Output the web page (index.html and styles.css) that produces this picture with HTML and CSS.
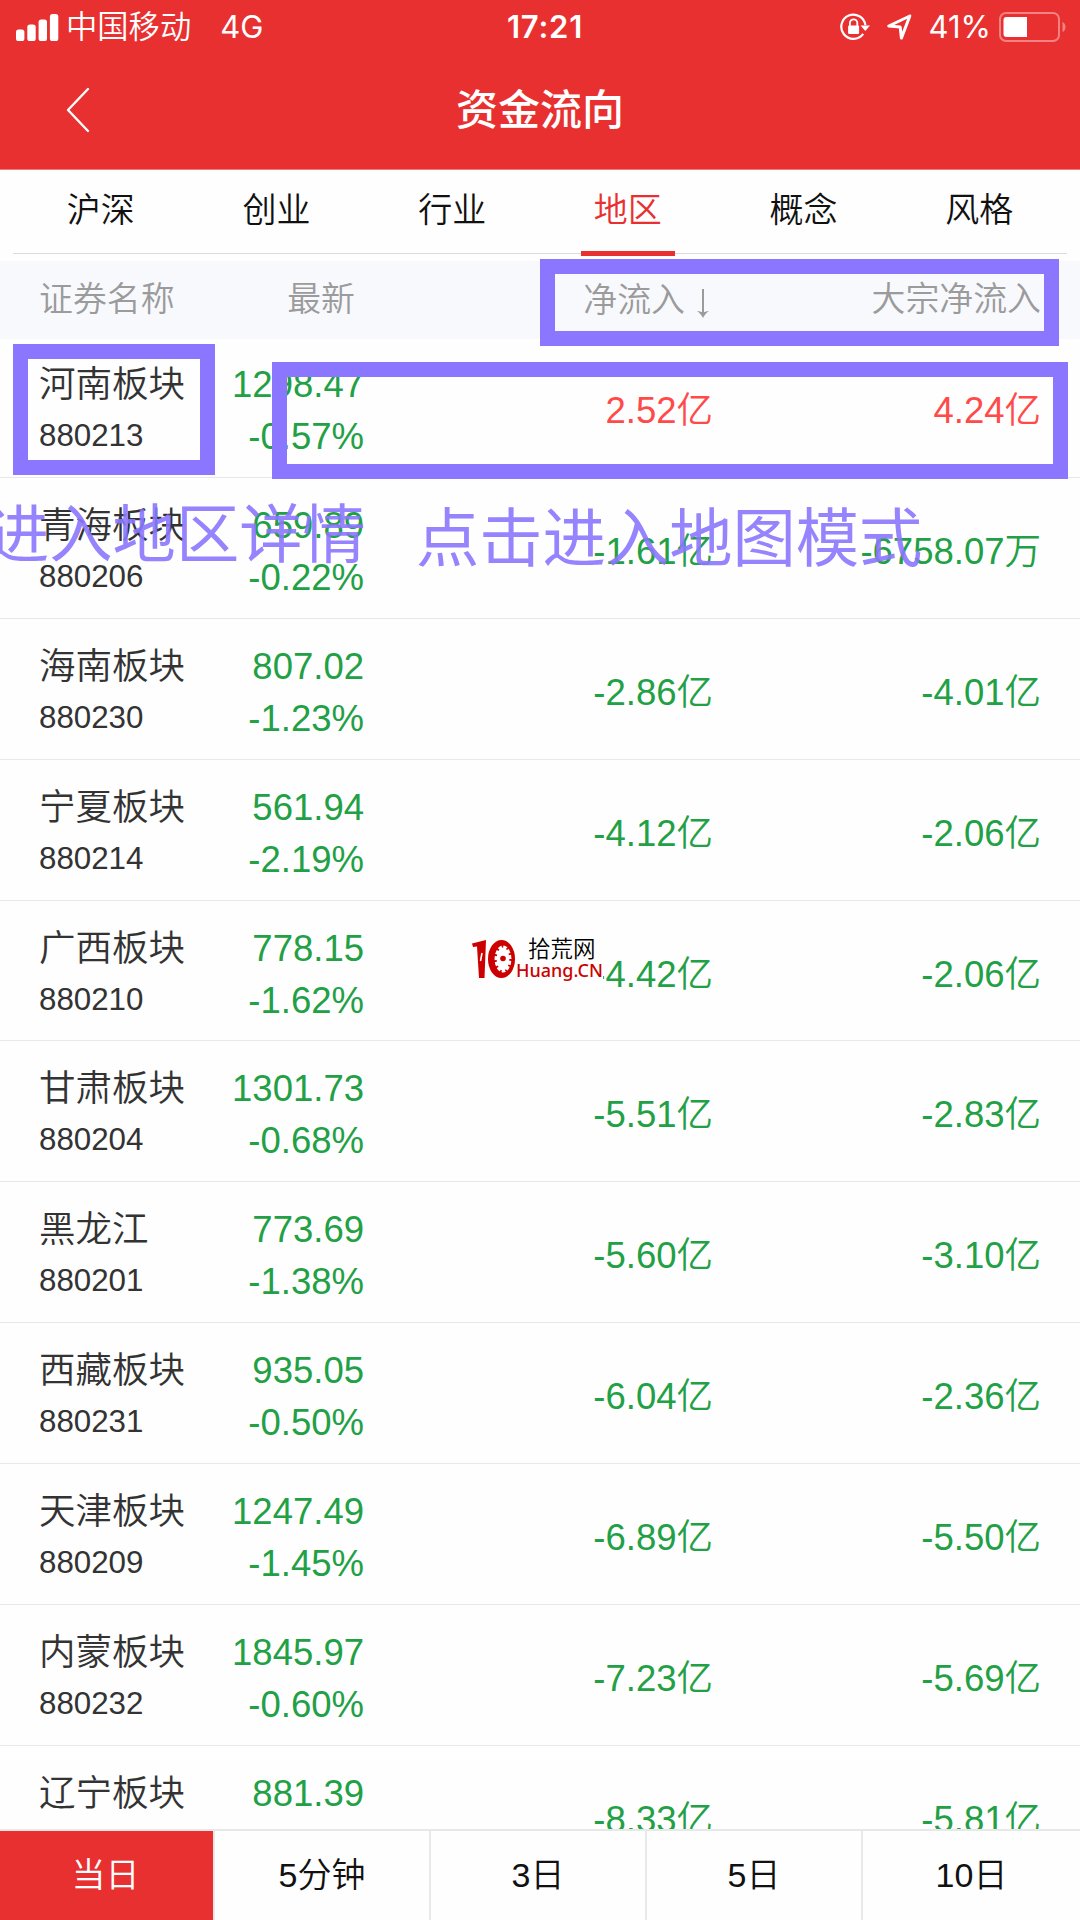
FILE: index.html
```html
<!DOCTYPE html>
<html lang="zh-CN">
<head>
  <meta charset="UTF-8" />
  <meta name="viewport" content="width=device-width, initial-scale=1.0" />
  <title>资金流向</title>
  <link rel="stylesheet" href="styles.css">
</head>
<body>

  <!-- HEADER -->
  <header>
    <div class="status-bar">
      <div class="status-left">
        <svg class="signal" width="43" height="27" viewBox="0 0 43 27" fill="#fff">
          <rect x="0" y="15.5" width="8.4" height="11.5" rx="2.6" />
          <rect x="11.3" y="10.5" width="8.4" height="16.5" rx="2.6" />
          <rect x="22.6" y="5.5" width="8.4" height="21.5" rx="2.6" />
          <rect x="33.9" y="0" width="8.4" height="27" rx="2.6" />
        </svg>
        <span class="carrier">中国移动</span>
        <span>4G</span>
      </div>
      <div class="status-time">17:21</div>
      <div class="status-right">
        <svg class="lock" width="30" height="28" viewBox="0 0 30 28" fill="none" stroke="#fff" stroke-width="2.2">
          <path d="M25.4 12.2A12.1 12.1 0 1 0 23.2 20.8" />
          <path d="M20.6 12.5h9.4l-4.7 5.6z" fill="#fff" stroke="none" />
          <path d="M9.9 13v-3a3.7 3.7 0 0 1 7.4 0v3" stroke-width="1.8" />
          <rect x="8.1" y="12.6" width="11" height="8.4" rx="1" fill="#fff" stroke="none" />
        </svg>
        <svg class="arrow" width="25" height="26" viewBox="0 0 25 26" fill="none" stroke="#fff" stroke-width="3" stroke-linejoin="round">
          <path d="M22.8 2L1.8 12l11.4 1.1 1.2 11z" />
        </svg>
        <span>41%</span>
        <svg class="battery" width="68" height="30" viewBox="0 0 68 30">
          <rect x="1" y="1" width="59" height="28" rx="6" fill="none" stroke="#fff" stroke-opacity=".4" stroke-width="2" />
          <path d="M7.5 5H28v20H7.5a3 3 0 0 1-3-3V8a3 3 0 0 1 3-3z" fill="#fff" />
          <path d="M63.5 10c4 1.5 4 8.5 0 10z" fill="#fff" fill-opacity=".4" />
        </svg>
      </div>
    </div>
    <div class="nav-bar">
      <svg class="back" width="24" height="46" viewBox="0 0 24 46" fill="none" stroke="#fff" stroke-width="2.4" stroke-linecap="round" stroke-linejoin="round">
        <path d="M22 2L2 23l20 21" />
      </svg>
      <h1>资金流向</h1>
    </div>
  </header>

  <!-- TABS -->
  <nav class="tabs">
    <div class="tab">沪深</div>
    <div class="tab">创业</div>
    <div class="tab">行业</div>
    <div class="tab active">地区</div>
    <div class="tab">概念</div>
    <div class="tab">风格</div>
  </nav>

  <!-- LIST -->
  <section class="list-head">
    <div>证券名称</div>
    <div class="latest">最新</div>
    <div class="sort">净流入<svg width="14" height="30" viewBox="0 0 14 30"><path d="M7 0v25" fill="none" stroke="#9b9b9b" stroke-width="2" /><path d="M1 22c3 .4 4.500 1 6 1s3-.6 6-1c-3 2-4.500 4-6 7-1.500-3-3-5-6-7z" fill="#9b9b9b" /></svg></div>
    <div>大宗净流入</div>
  </section>

  <main class="list">
    <div class="row">
      <div class="name">河南板块<small>880213</small></div>
      <div class="price">1298.47<br>-0.57%</div>
      <div class="flow up">2.52亿</div>
      <div class="flow up">4.24亿</div>
    </div>
    <div class="row">
      <div class="name">青海板块<small>880206</small></div>
      <div class="price">659.89<br>-0.22%</div>
      <div class="flow">-1.61亿</div>
      <div class="flow">-6758.07万</div>
    </div>
    <div class="row">
      <div class="name">海南板块<small>880230</small></div>
      <div class="price">807.02<br>-1.23%</div>
      <div class="flow">-2.86亿</div>
      <div class="flow">-4.01亿</div>
    </div>
    <div class="row">
      <div class="name">宁夏板块<small>880214</small></div>
      <div class="price">561.94<br>-2.19%</div>
      <div class="flow">-4.12亿</div>
      <div class="flow">-2.06亿</div>
    </div>
    <div class="row">
      <div class="name">广西板块<small>880210</small></div>
      <div class="price">778.15<br>-1.62%</div>
      <div class="flow">-4.42亿</div>
      <div class="flow">-2.06亿</div>
    </div>
    <div class="row">
      <div class="name">甘肃板块<small>880204</small></div>
      <div class="price">1301.73<br>-0.68%</div>
      <div class="flow">-5.51亿</div>
      <div class="flow">-2.83亿</div>
    </div>
    <div class="row">
      <div class="name">黑龙江<small>880201</small></div>
      <div class="price">773.69<br>-1.38%</div>
      <div class="flow">-5.60亿</div>
      <div class="flow">-3.10亿</div>
    </div>
    <div class="row">
      <div class="name">西藏板块<small>880231</small></div>
      <div class="price">935.05<br>-0.50%</div>
      <div class="flow">-6.04亿</div>
      <div class="flow">-2.36亿</div>
    </div>
    <div class="row">
      <div class="name">天津板块<small>880209</small></div>
      <div class="price">1247.49<br>-1.45%</div>
      <div class="flow">-6.89亿</div>
      <div class="flow">-5.50亿</div>
    </div>
    <div class="row">
      <div class="name">内蒙板块<small>880232</small></div>
      <div class="price">1845.97<br>-0.60%</div>
      <div class="flow">-7.23亿</div>
      <div class="flow">-5.69亿</div>
    </div>
    <div class="row">
      <div class="name">辽宁板块</div>
      <div class="price">881.39</div>
      <div class="flow">-8.33亿</div>
      <div class="flow">-5.81亿</div>
    </div>
  </main>

  <!-- PERIOD -->
  <footer class="periods">
    <div class="period active">当日</div>
    <div class="period">5分钟</div>
    <div class="period">3日</div>
    <div class="period">5日</div>
    <div class="period">10日</div>
  </footer>

  <!-- ANNOTATIONS -->
  <div class="mark mark-head"></div>
  <div class="mark mark-name"></div>
  <div class="mark mark-row"></div>
  <div class="note note-detail">进入地区详情</div>
  <div class="note note-map">点击进入地图模式</div>

  <!-- WATERMARK -->
  <div class="watermark">
    <svg width="44" height="40" viewBox="0 0 44 40">
      <path d="M0 4.500L14 1l-1.500 38H7L5 7.500 1 8z" fill="#c00" />
      <path d="M10 14L8.500 22" stroke="#fff" stroke-width="1.500" />
      <ellipse cx="29.500" cy="20" rx="13.500" ry="19" fill="#c00" />
      <ellipse cx="31" cy="20" rx="8.500" ry="13.500" fill="#fff" />
      <ellipse cx="31" cy="20" rx="7.800" ry="13" fill="none" stroke="#c00" stroke-width="3" stroke-dasharray="1.800 4.200" />
      <circle cx="31" cy="19.500" r="2.800" fill="#c00" />
    </svg>
    <div class="watermark-text">
      <span class="cn">拾荒网</span>
      <span class="en">Huang.CN</span>
    </div>
  </div>

</body>
</html>
```
FILE: styles.css
```css
* {
  box-sizing: border-box;
  margin: 0;
  padding: 0;
}

body {
  position: relative;
  width: 1080px;
  height: 1920px;
  display: flex;
  flex-direction: column;
  overflow: hidden;
  background: #fefefe;
  color: #111;
  font-family: "Liberation Sans", "Noto Sans CJK SC", sans-serif;
  font-weight: 350;
}

svg {
  display: block;
  flex: none;
}

/* --- HEADER --- */
header {
  flex: none;
  height: 170px;
  background: #e93030;
  border-bottom: 1px solid #f27a7a;
  color: #fff;
}

.status-bar {
  height: 54px;
  padding: 0 13px 0 16px;
  display: grid;
  grid-template-columns: 1fr auto 1fr;
  align-items: center;
  font-family: Inter, "Noto Sans CJK SC", sans-serif;
  font-size: 31px;
  font-weight: 400;
  line-height: 54px;
}

.status-left,
.status-right {
  display: flex;
  align-items: center;
}

.status-right {
  justify-content: flex-end;
}

.signal {
  margin-right: 7px;
}

.carrier {
  margin-right: 29px;
  font-size: 31.3px;
  font-weight: 350;
}

.status-time {
  padding-left: 7px;
  font-weight: 600;
  font-size: 31px;
  letter-spacing: 0.8px;
}

.lock {
  margin-right: 17px;
}

.arrow {
  margin-right: 17px;
}

.battery {
  margin-left: 8px;
}

.nav-bar {
  height: 111px;
  padding: 0 66px;
  display: grid;
  grid-template-columns: 1fr auto 1fr;
  align-items: center;
}

h1 {
  padding-top: 3px;
  font-size: 42px;
  font-weight: 500;
  line-height: 60px;
}

/* --- TABS --- */
.tabs {
  flex: none;
  display: flex;
  height: 84px;
  margin: 0 13px 7px;
  border-bottom: 1px solid #dcdcdc;
}

.tab {
  flex: 1;
  display: flex;
  flex-direction: column;
  align-items: center;
  font-size: 34px;
  line-height: 81px;
}

.tab.active {
  color: #e93030;
}

.tab.active::after {
  content: "";
  flex: none;
  width: 94px;
  height: 5px;
  background: #e93030;
}

/* --- LIST --- */
.list-head,
.row {
  display: grid;
  grid-template-columns: 161px 164px 349px 328px;
  padding-left: 39px;
}

.list-head {
  flex: none;
  height: 78px;
  background: #f8f9fd;
  color: #9b9b9b;
  font-size: 33.9px;
  line-height: 76px;
  text-align: right;
}

.list-head div:first-child {
  text-align: left;
}

.latest {
  padding-right: 9px;
}

.sort {
  display: flex;
  justify-content: flex-end;
  align-items: center;
  gap: 11px;
  padding-right: 3px;
}

.sort svg {
  margin-top: 7px;
}

.list {
  flex: 1;
  min-height: 0;
  overflow: hidden;
}

.row {
  height: 140.87px;
  border-bottom: 1px solid #e8e8e8;
  font-size: 36.5px;
  line-height: 52px;
}

.row:first-child {
  height: 139px;
}

.name {
  padding-top: 22px;
  color: #333;
  white-space: nowrap;
}

.name small {
  display: block;
  font-size: 31.3px;
  line-height: 50px;
}

.price,
.flow {
  color: #22a045;
  text-align: right;
}

.price {
  padding-top: 22px;
}

.flow {
  padding-top: 48px;
}

.flow.up {
  color: #ff4a4a;
}

.row:first-child .name,
.row:first-child .price {
  padding-top: 20px;
}

.row:first-child .flow {
  padding-top: 46px;
}

/* --- PERIOD --- */
.periods {
  flex: none;
  display: grid;
  grid-template-columns: 215px 216px 216px 216px 1fr;
  height: 91px;
  border-top: 2px solid #e8e8e8;
}

.period {
  border-right: 2px solid #e8e8e8;
  font-size: 34px;
  line-height: 88px;
  text-align: center;
}

.period:last-child {
  border-right: 0;
}

.period.active {
  padding-right: 2px;
  background: #e93030;
  background-clip: padding-box;
  color: #fff;
}

/* --- ANNOTATIONS --- */
.mark {
  position: absolute;
  border: 15.5px solid #8b76ff;
}

.mark-head {
  left: 540px;
  top: 259px;
  width: 519px;
  height: 87px;
}

.mark-name {
  left: 13px;
  top: 344px;
  width: 202px;
  height: 131px;
}

.mark-row {
  left: 272px;
  top: 362px;
  width: 796px;
  height: 117px;
}

.note {
  position: absolute;
  color: #8b76ff;
  font-size: 63.3px;
  font-weight: 400;
  line-height: 80px;
  white-space: nowrap;
  opacity: 0.9;
}

.note-detail {
  left: -14px;
  top: 495px;
}

.note-map {
  left: 416px;
  top: 499px;
}

/* --- WATERMARK --- */
.watermark {
  position: absolute;
  left: 472px;
  top: 939px;
  height: 42px;
  display: flex;
  background: #fefefe;
}

.watermark-text {
  display: flex;
  flex-direction: column;
}

.cn {
  padding-left: 12px;
  color: #000;
  font-size: 22.5px;
  line-height: 22px;
}

.en {
  color: #c00;
  font-family: "Noto Sans", "Open Sans", sans-serif;
  font-size: 18px;
  font-weight: 500;
  line-height: 18px;
}
```
